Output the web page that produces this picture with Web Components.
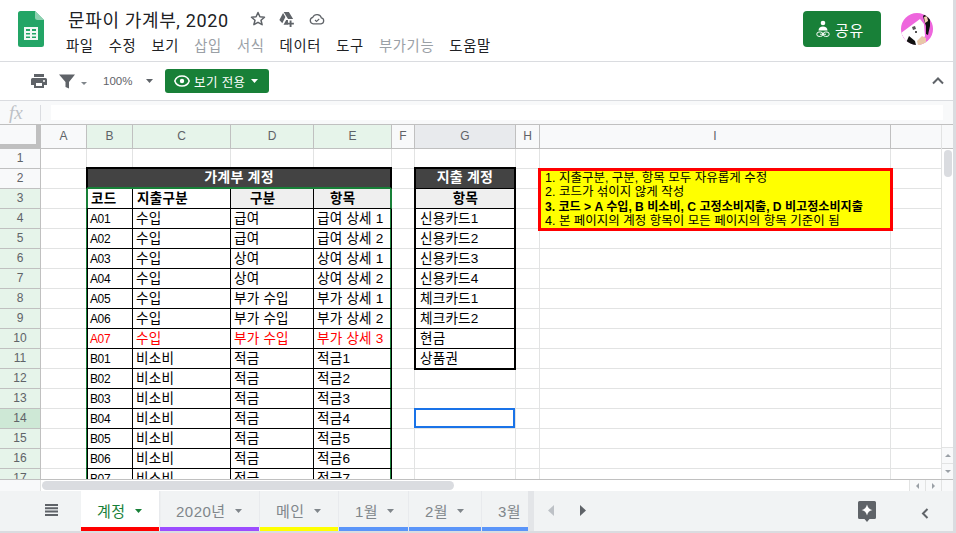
<!DOCTYPE html>
<html lang="ko">
<head>
<meta charset="utf-8">
<title>문파이 가계부, 2020</title>
<style>
  html, body { margin: 0; height: 100%; overflow: hidden; background: #dadce0; }
  body { font-family: "Liberation Sans", "Noto Sans CJK KR", sans-serif; }
</style>
</head>
<body>
<sheet-app></sheet-app>

<script>
const FONT = '"Liberation Sans", "Noto Sans CJK KR", sans-serif';

class DocHeader extends HTMLElement {
    constructor() {
        super();
        this.attachShadow({ mode: "open" });
        this.shadowRoot.innerHTML = `
            <style>
                :host { display: flex; height: 61px; border-bottom: 1px solid #dadce0; background: #fff; }
                .logo { width: 26px; height: 36px; margin: 11px 24px 0 18px; flex: none; }
                .main { flex: 1; min-width: 0; padding-top: 7px; }
                .title { display: flex; align-items: center; height: 24px; }
                .name { font: 18px "Roboto", "Noto Sans CJK KR", sans-serif; letter-spacing: .65px; color: #202124; width: 182px; white-space: nowrap; }
                .title svg { width: 16px; height: 16px; flex: none; }
                .menu { display: flex; margin: 5px 0 0 -2px; font-size: 14.3px; line-height: 20px; color: #202124; letter-spacing: .7px; }
                .menu span { margin-right: 15px; white-space: nowrap; }
                .menu .off { color: #9aa0a6; }
                .share { width: 78px; height: 36px; margin: 11px 20px 0 0; padding-left: 13px; background: #188038; border-radius: 4px; color: #fff; display: flex; align-items: center; gap: 5px; font-size: 15px; letter-spacing: .6px; box-sizing: border-box; flex: none; }
                .avatar { width: 32px; height: 32px; margin: 13px 20px 0 0; flex: none; }
            </style>
            <svg class="logo" viewBox="0 0 26 36">
                <path d="M2.5 0H17l9 9v24.5a2.5 2.5 0 0 1-2.5 2.5h-21A2.5 2.5 0 0 1 0 33.500V2.500A2.500 2.500 0 0 1 2.500 0z" fill="#23a566"/>
                <path d="M17 0l9 9h-6.500A2.500 2.500 0 0 1 17 6.500z" fill="#8ed1b1"/>
                <path d="M6 16h14v13H6zM8 18v2h4v-2zm6 0v2h4v-2zM8 22v1.500h4V22zm6 0v1.500h4V22zM8 25.500V27h4v-1.500zm6 0V27h4v-1.500z" fill="#f1f8f4" fill-rule="evenodd"/>
            </svg>
            <div class="main">
                <div class="title">
                    <span class="name">문파이 가계부, 2020</span>
                    <svg viewBox="0 0 16 16" style="margin-right:13px"><path d="M8 1.500l1.900 4.300 4.600.4-3.500 3 1.100 4.500L8 11.300l-4.100 2.400L5 9.200l-3.500-3 4.600-.4z" fill="none" stroke="#5f6368" stroke-width="1.500" stroke-linejoin="round"/></svg>
                    <svg viewBox="0 0 17 17" style="margin-right:14px"><path d="M5 1h5.500L15 8.500H9.600L7.400 5zM4.300 2L6.800 6.300 3.500 13 .4 9.500zM4.800 14.500L7.600 9.500H9.500V14.500z" fill="#5f6368"/><path d="M11.300 10h2v2.500h2.500v1.800h-2.500V17h-2v-2.700H9v-1.800h2.300z" fill="#5f6368"/></svg>
                    <svg viewBox="0 0 16 16"><path d="M4.300 12.800a3.300 3.300 0 0 1-.5-6.500 4.600 4.600 0 0 1 8.600.6 3 3 0 0 1-.4 5.900z" fill="none" stroke="#5f6368" stroke-width="1.300"/><path d="M6 9l1.500 1.500L10.200 8" fill="none" stroke="#5f6368" stroke-width="1.100"/></svg>
                </div>
                <div class="menu">
                    <span>파일</span><span>수정</span><span>보기</span><span class="off">삽입</span><span class="off">서식</span><span>데이터</span><span>도구</span><span class="off">부가기능</span><span>도움말</span>
                </div>
            </div>
            <div class="share">
                <svg width="14" height="18" viewBox="0 0 14 18"><circle cx="7" cy="3" r="2.300" fill="#fff"/><path d="M2.500 10.500c0-2.400 2-4 4.500-4s4.500 1.600 4.500 4z" fill="#fff"/><rect x=".8" y="12" width="6" height="4.400" rx="2.200" fill="none" stroke="#fff"/><rect x="7.200" y="12" width="6" height="4.400" rx="2.200" fill="none" stroke="#fff"/><path d="M4 14.200h6" stroke="#fff"/></svg>
                <span>공유</span>
            </div>
            <svg class="avatar" viewBox="0 0 32 32">
                <defs><clipPath id="av"><circle cx="16" cy="16" r="16"/></clipPath></defs>
                <g clip-path="url(#av)">
                    <rect width="32" height="32" fill="#ee66dd"/>
                    <path d="M0 20L19 6l4 5 1 12-6 9H7z" fill="#fff"/>
                    <path d="M4 32l4-9 6 5 1 4z" fill="#111"/>
                    <path d="M11 14l3-1 1 3-3 1zM14 18l2 0 0 2-2 0z" fill="#555"/>
                    <path d="M22 3l3-3 4 4 0 9-2 9-2-1 0-8-2-6z" fill="#111"/>
                    <path d="M23 4l3-1 1 5-3 2z" fill="#f2d3b3"/>
                    <path d="M16 28l5-5 4 2 0 7H17z" fill="#e8c8a8"/>
                </g>
            </svg>
        `;
    }
}

class ToolBar extends HTMLElement {
    constructor() {
        super();
        this.attachShadow({ mode: "open" });
        this.shadowRoot.innerHTML = `
            <style>
                :host { display: flex; align-items: center; height: 38px; border-bottom: 1px solid #dadce0; background: #fff; padding-left: 31px; }
                svg { flex: none; display: block; }
                .zoom { font-size: 11.500px; color: #5f6368; width: 44px; margin-left: 16px; }
                .view { display: flex; align-items: center; height: 24px; width: 104px; margin-left: 12px; background: #188038; color: #fff; border-radius: 3px; font-size: 12.500px; letter-spacing: .4px; padding-left: 9px; box-sizing: border-box; }
                .view span { margin: 0 6px 0 4px; white-space: nowrap; }
                .up { margin-left: auto; margin-right: 9px; }
            </style>
            <svg width="16" height="14" viewBox="0 0 16 14"><path d="M3 0h10v3H3zM1.500 4h13A1.500 1.500 0 0 1 16 5.500V11h-3v3H3v-3H0V5.500A1.500 1.500 0 0 1 1.500 4zM5 9v3h6V9zm8-3a1 1 0 1 0 0 2 1 1 0 0 0 0-2z" fill="#5f6368" fill-rule="evenodd"/></svg>
            <svg width="16" height="16" viewBox="0 0 16 16" style="margin-left:12px"><path d="M0 1.500h16L10 9v6.500L6.500 14V9z" fill="#5f6368"/></svg>
            <svg width="6" height="3" viewBox="0 0 6 3" style="margin:5px 0 0 6px"><path d="M0 0h6L3 3z" fill="#80868b"/></svg>
            <span class="zoom">100%</span>
            <svg width="7" height="4" viewBox="0 0 7 4" style="margin-left:-1px"><path d="M0 0h7L3.500 4z" fill="#5f6368"/></svg>
            <div class="view">
                <svg width="16" height="12" viewBox="0 0 16 12"><path d="M8 1C4.500 1 1.800 3 .8 6c1 3 3.700 5 7.200 5s6.200-2 7.200-5c-1-3-3.700-5-7.200-5z" fill="none" stroke="#fff" stroke-width="1.500"/><circle cx="8" cy="6" r="2.200" fill="#fff"/></svg>
                <span>보기 전용</span>
                <svg width="7" height="4" viewBox="0 0 7 4"><path d="M0 0h7L3.500 4z" fill="#fff"/></svg>
            </div>
            <svg class="up" width="12" height="8" viewBox="0 0 12 8"><path d="M1 6.500l5-5 5 5" fill="none" stroke="#5f6368" stroke-width="2"/></svg>
        `;
    }
}

class FormulaBar extends HTMLElement {
    constructor() {
        super();
        this.attachShadow({ mode: "open" });
        this.shadowRoot.innerHTML = `
            <style>
                :host { display: flex; align-items: center; height: 23px; background: #f8f9fa; box-sizing: border-box; }
                .fx { font: italic 19px "Liberation Serif", serif; color: #bdc1c6; width: 31px; padding-left: 9px; }
                .sep { width: 1px; height: 16px; background: #dadce0; }
                .input { flex: 1; height: 15px; background: #fff; margin: 0 10px; }
            </style>
            <span class="fx">fx</span><span class="sep"></span><span class="input"></span>
        `;
    }
}

// 열 너비, 마지막 열은 스크롤바 앞까지
const COLS = [41, 46, 46, 98, 83, 78, 23, 101, 24, 351, 51];
const COL_NAMES = ["", "A", "B", "C", "D", "E", "F", "G", "H", "I", ""];

const LEDGER = [
    ["A01", "수입", "급여", "급여 상세 1"],
    ["A02", "수입", "급여", "급여 상세 2"],
    ["A03", "수입", "상여", "상여 상세 1"],
    ["A04", "수입", "상여", "상여 상세 2"],
    ["A05", "수입", "부가 수입", "부가 상세 1"],
    ["A06", "수입", "부가 수입", "부가 상세 2"],
    ["A07", "수입", "부가 수입", "부가 상세 3"],
    ["B01", "비소비", "적금", "적금1"],
    ["B02", "비소비", "적금", "적금2"],
    ["B03", "비소비", "적금", "적금3"],
    ["B04", "비소비", "적금", "적금4"],
    ["B05", "비소비", "적금", "적금5"],
    ["B06", "비소비", "적금", "적금6"],
    ["B07", "비소비", "적금", "적금7"]
];
const ACCOUNTS = ["신용카드1", "신용카드2", "신용카드3", "신용카드4", "체크카드1", "체크카드2", "현금", "상품권"];

class SheetGrid extends HTMLElement {
    constructor() {
        super();
        this.attachShadow({ mode: "open" });
        let html = `
            <style>
                :host { display: block; height: 354px; overflow: hidden; background: #fff; font-family: ${FONT}; }
                .grid { display: grid; grid-template-columns: ${COLS.map(c => c + "px").join(" ")}; grid-auto-rows: 20px; grid-template-rows: 24px; }
                .c { border-right: 1px solid #e2e3e3; border-bottom: 1px solid #e2e3e3; box-sizing: border-box; font-size: 13.600px; letter-spacing: .2px; line-height: 20px; padding: 0 3px; white-space: nowrap; overflow: hidden; color: #000; position: relative; }
                .h { background: #f8f9fa; border-color: #c0c0c0; color: #5f6368; text-align: center; font-size: 12px; letter-spacing: 0; line-height: 23px; padding: 0; }
                .rh { line-height: 19px; }
                .corner { border-right: 5px solid #c0c0c0; border-bottom: 5px solid #c0c0c0; background: #f8f9fa; box-shadow: 1px 0 0 #c0c0c0; }
                .on { background: #e6f4ea; }
                .act { background: #cee8d6; }
                .sel { background: #e8eaed; }
                .head { background: #434343; color: #fff; font-weight: bold; text-align: center; font-size: 14px; letter-spacing: .2px; line-height: 17px; z-index: 1; }
                .g { background: #efefef; }
                .red { color: #f00; }
                .k { border-right: 1px solid #000; border-bottom: 1px solid #000; }
                .code { font-size: 12px; letter-spacing: -.4px; padding-left: 3px; margin-left: -1px; z-index: 1; }
                .bold { font-weight: bold; font-size: 13.500px; letter-spacing: .3px; line-height: 19px; }
                .acc { margin-left: -1px; padding-left: 4px; border-left: 2px solid #000; border-right: 2px solid #000; z-index: 1; }
                .note { background: #ff0; border: 3px solid #f00; margin: -1px -2px -2px -2px; font-size: 12.500px; letter-spacing: 0; padding: 0 0 0 4px; white-space: nowrap; z-index: 2; }
                .note div { height: 14.300px; line-height: 14.300px; }
                .note b { font-size: 12.100px; }
                .cur { box-shadow: inset 0 0 0 2px #1a73e8; margin: -1px 0 0 -1px; z-index: 1; }
            </style>
            <div class="grid">
        `;
        const cell = (text, cls, style) =>
            `<div class="c ${cls || ""}"${style ? ` style="${style}"` : ""}>${text}</div>`;

        // 머리글
        html += `<div class="c corner"></div>`;
        COL_NAMES.slice(1).forEach(name => {
            const cls = name && "BCDE".includes(name) ? "on" : name === "G" ? "sel" : "";
            html += cell(name, "h " + cls);
        });

        for (let r = 1; r <= 17; r++) {
            const rowCls = r === 14 ? "act" : r >= 3 ? "on" : "";
            html += cell(r, "h rh " + rowCls);
            html += cell("", "");                              // A

            // 가계부 계정 B:E
            if (r === 2) {
                html += cell("가계부 계정", "head", "grid-column: span 4; margin: -2px 0 0 -1px; border: 2px solid #000; border-bottom: 2px solid #188038;");
            } else if (r === 3) {
                html += cell("코드", "k bold", "margin-left: -1px; border-left: 2px solid #188038; padding-left: 3px; z-index: 1;");
                html += cell("지출구분", "k bold", "padding-left: 4px;");
                html += cell("구분", "k g bold", "padding-left: 19px;");
                html += cell("항목", "g bold", "border-bottom: 1px solid #000; padding-left: 16px; border-right: 2px solid #188038;");
            } else if (r >= 4) {
                const d = LEDGER[r - 4];
                const red = r === 10 ? "red" : "";
                html += cell(d[0], "k code " + red, "border-left: 1px solid #188038; box-shadow: inset 1px 0 0 #000;");
                html += cell(d[1], "k " + red);
                html += cell(d[2], "k " + red);
                html += cell(d[3], "k " + red, "border-right: 1px solid #000; box-shadow: inset -1px 0 0 #188038;");
            } else {
                html += cell("") + cell("") + cell("") + cell("");
            }

            html += cell("");                                  // F

            // 지출 계정 G
            if (r === 2) {
                html += cell("지출 계정", "head", "margin: -2px 0 0 -1px; border: 2px solid #000; border-bottom: 1px solid #000;");
            } else if (r === 3) {
                html += cell("항목", "g k acc bold", "text-align: center; border-left: 2px solid #000; border-right: 2px solid #000;");
            } else if (r >= 4 && r <= 11) {
                html += cell(ACCOUNTS[r - 4], "k acc", "border-left: 2px solid #000; border-right: 2px solid #000;" + (r === 11 ? "border-bottom: 2px solid #000; margin-bottom: -1px;" : ""));
            } else {
                html += cell("", r === 14 ? "cur" : "");
            }

            html += cell("");                                  // H

            // 메모 I
            if (r === 2) {
                html += `<div class="c note" style="grid-row: span 3"><div>1. 지출구분, 구분, 항목 모두 자유롭게 수정</div><div>2. 코드가 섞이지 않게 작성</div><div><b>3. 코드 &gt; A 수입, B 비소비, C 고정소비지출, D 비고정소비지출</b></div><div>4. 본 페이지의 계정 항목이 모든 페이지의 항목 기준이 됨</div></div>`;
            } else if (r !== 3 && r !== 4) {
                html += cell("");
            }
            html += cell("");                                  // 마지막 열
        }
        html += `</div>`;
        this.shadowRoot.innerHTML = html;
    }
}

class ScrollColumn extends HTMLElement {
    constructor() {
        super();
        this.attachShadow({ mode: "open" });
        this.shadowRoot.innerHTML = `
            <style>
                :host { display: flex; flex-direction: column; width: 12px; height: 354px; background: #fff; border-left: 1px solid #e2e3e3; box-sizing: border-box; }
                .top { height: 24px; background: #f8f9fa; border-bottom: 1px solid #c0c0c0; box-sizing: border-box; }
                .thumb { width: 8px; height: 27px; background: #dadce0; border-radius: 4px; margin: 1px 0 0 2px; }
                .arrows { margin-top: auto; }
                .arrow { height: 16px; border-top: 1px solid #e2e3e3; background: #f8f9fa; display: flex; align-items: center; justify-content: center; box-sizing: border-box; }
            </style>
            <div class="top"></div>
            <div class="thumb"></div>
            <div class="arrows">
                <div class="arrow"><svg width="6" height="3"><path d="M0 3h6L3 0z" fill="#9aa0a6"/></svg></div>
                <div class="arrow"><svg width="6" height="3"><path d="M0 0h6L3 3z" fill="#9aa0a6"/></svg></div>
            </div>
        `;
    }
}

class HScroll extends HTMLElement {
    constructor() {
        super();
        this.attachShadow({ mode: "open" });
        this.shadowRoot.innerHTML = `
            <style>
                :host { display: flex; height: 12px; flex: none; background: #fff; border-top: 1px solid #c0c0c0; box-sizing: border-box; }
                .lead { width: 41px; background: #f8f9fa; flex: none; border-right: 1px solid #e2e3e3; box-sizing: border-box; }
                .thumb { width: 412px; height: 9px; margin: 1px 0 0 1px; background: #dadce0; border-radius: 5px; flex: none; }
                .btn { width: 16px; background: #f8f9fa; border-left: 1px solid #e2e3e3; display: flex; align-items: center; justify-content: center; box-sizing: border-box; }
                .end { width: 12px; background: #f8f9fa; border-left: 1px solid #e2e3e3; box-sizing: border-box; }
                .gap { flex: 1; }
            </style>
            <div class="lead"></div><div class="thumb"></div><div class="gap"></div>
            <div class="btn"><svg width="3" height="6"><path d="M3 0v6L0 3z" fill="#9aa0a6"/></svg></div>
            <div class="btn"><svg width="3" height="6"><path d="M0 0v6l3-3z" fill="#9aa0a6"/></svg></div>
            <div class="end"></div>
        `;
    }
}

class SheetTab extends HTMLElement {
    constructor() {
        super();
        this.attachShadow({ mode: "open" });
        this.shadowRoot.innerHTML = `
            <style>
                :host { display: flex; flex: none; flex-direction: column; width: var(--w); box-sizing: border-box; }
                .body { flex: 1; display: flex; align-items: center; padding: 3px 0 0 16px; gap: 9px; color: #80868b; font-size: 15px; letter-spacing: .5px; white-space: nowrap; }
                .line { height: 4px; background: var(--c); }
                :host([active]) { background: #fff; box-shadow: 0 0 2px rgba(60,64,67,.3); }
                :host([active]) .body { color: #188038; }
                :host([active]) path { fill: #188038; }
                :host(:not([active])) { border-left: 1px solid #e8eaed; }
                path { fill: #80868b; }
            </style>
            <div class="body"><slot></slot><svg width="7" height="4"><path d="M0 0h7L3.500 4z"/></svg></div>
            <div class="line"></div>
        `;
    }
    connectedCallback() {
        this.style.setProperty("--w", this.getAttribute("w") + "px");
        this.style.setProperty("--c", this.getAttribute("color"));
    }
}

class TabBar extends HTMLElement {
    constructor() {
        super();
        this.attachShadow({ mode: "open" });
        this.shadowRoot.innerHTML = `
            <style>
                :host { display: flex; height: 40px; flex: none; background: #f1f3f4; }
                .menu { width: 81px; flex: none; display: flex; align-items: center; justify-content: center; padding: 0 0 3px 21px; box-sizing: border-box; }
                .tabs { display: flex; width: 447px; overflow: hidden; flex: none; }
                .fade { width: 6px; flex: none; background: #e3e5e8; }
                .nav { margin-bottom: 2px; align-self: center; }
                .right { margin-left: auto; display: flex; align-items: center; padding: 0 24px 0 0; gap: 45px; }
            </style>
            <div class="menu"><svg width="13" height="12" viewBox="0 0 13 12"><path d="M0 0h13v2H0zM0 3.300h13v2H0zM0 6.600h13v2H0zM0 10h13v2H0z" fill="#5f6368"/></svg></div>
            <div class="tabs"><slot></slot></div>
            <div class="fade"></div>
            <svg class="nav" width="6" height="11" viewBox="0 0 6 11" style="margin-left:14px"><path d="M6 0v11L0 5.500z" fill="#bdc1c6"/></svg>
            <svg class="nav" width="6" height="11" viewBox="0 0 6 11" style="margin-left:26px"><path d="M0 0v11l6-5.500z" fill="#5f6368"/></svg>
            <div class="right">
                <svg width="18" height="21" viewBox="0 0 18 21"><path d="M1.500 0h15A1.500 1.500 0 0 1 18 1.500v15a1.500 1.500 0 0 1-1.500 1.500H11.500L9 21 6.500 18h-5A1.500 1.500 0 0 1 0 16.500v-15A1.500 1.500 0 0 1 1.500 0z" fill="#5f6368"/><path d="M9 3.500c.7 3.200 2.300 4.800 5.500 5.500-3.200.7-4.800 2.300-5.500 5.500C8.300 11.300 6.700 9.700 3.500 9c3.200-.7 4.800-2.300 5.500-5.500z" fill="#fff"/></svg>
                <svg width="8" height="11" viewBox="0 0 8 11" style="margin-top:4px"><path d="M6.500 1l-4.500 4.500 4.500 4.500" fill="none" stroke="#5f6368" stroke-width="2"/></svg>
            </div>
        `;
    }
}

class SheetApp extends HTMLElement {
    constructor() {
        super();
        this.attachShadow({ mode: "open" });
        this.shadowRoot.innerHTML = `
            <style>
                :host { display: flex; flex-direction: column; width: 953px; height: 531px; background: #fff; font-family: ${FONT}; overflow: hidden; }
                .work { display: flex; height: 354px; flex: none; border-top: 1px solid #c0c0c0; }
                sheet-grid { flex: 1; min-width: 0; }
            </style>
            <doc-header></doc-header>
            <tool-bar></tool-bar>
            <formula-bar></formula-bar>
            <div class="work"><sheet-grid></sheet-grid><scroll-column></scroll-column></div>
            <h-scroll></h-scroll>
            <tab-bar>
                <sheet-tab active w="78" color="#ff0000">계정</sheet-tab>
                <sheet-tab w="100" color="#9c4dff">2020년</sheet-tab>
                <sheet-tab w="79" color="#ffff00">메인</sheet-tab>
                <sheet-tab w="70" color="#5b95f9">1월</sheet-tab>
                <sheet-tab w="73" color="#5b95f9">2월</sheet-tab>
                <sheet-tab w="70" color="#5b95f9">3월</sheet-tab>
            </tab-bar>
        `;
    }
}

customElements.define("doc-header", DocHeader);
customElements.define("tool-bar", ToolBar);
customElements.define("formula-bar", FormulaBar);
customElements.define("sheet-grid", SheetGrid);
customElements.define("scroll-column", ScrollColumn);
customElements.define("h-scroll", HScroll);
customElements.define("sheet-tab", SheetTab);
customElements.define("tab-bar", TabBar);
customElements.define("sheet-app", SheetApp);
</script>
</body>
</html>
